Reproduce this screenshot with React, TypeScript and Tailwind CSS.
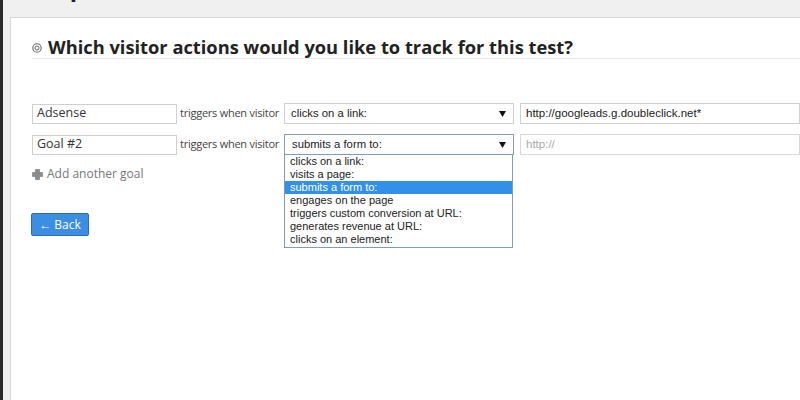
const options = [
  "clicks on a link:",
  "visits a page:",
  "submits a form to:",
  "engages on the page",
  "triggers custom conversion at URL:",
  "generates revenue at URL:",
  "clicks on an element:",
];

const Arrow = () => (
  <svg width="7" height="6" viewBox="0 0 7 6" className="shrink-0">
    <path d="M0 0 L7 0 L3.5 6 Z" fill="#111" />
  </svg>
);

const App = () => {
  return (
    <div className="flex h-[400px] w-[800px] overflow-hidden bg-[#f0f0f0] font-['Open_Sans',sans-serif]">
      <div className="w-[3px] shrink-0 bg-[#2a2a2a]" />
      <div className="flex flex-1 flex-col">
        <div className="h-[17px] overflow-hidden pl-[29px]">
          <div className="-mt-[33px] text-[24px] font-bold leading-[40px] text-[#222]">Step</div>
        </div>
        <div className="ml-[7px] flex-1 border-l border-t border-[#d8d8d8] bg-white pl-[21px] pt-[17px]">
          {/* title */}
          <div className="flex items-center gap-[6px] border-b border-[#ebebeb] text-[18.3px] font-bold leading-[23px] text-[#222]">
            <svg width="10" height="10" viewBox="0 0 10 10" className="mt-[2px] shrink-0">
              <circle cx="5" cy="5" r="4.2" fill="none" stroke="#666" strokeWidth="1.1" />
              <circle cx="5" cy="5" r="2" fill="none" stroke="#666" strokeWidth="1" />
            </svg>
            <span>Which visitor actions would you like to track for this test?</span>
          </div>

          {/* goal rows */}
          <div className="mt-[44px] flex flex-col gap-[10px]">
            <div className="flex items-center">
              <div className="flex h-[20px] w-[145px] shrink-0 items-center border border-[#d0d0d0] px-[4px] text-[12.5px] text-[#333]">Adsense</div>
              <div className="w-[107px] shrink-0 whitespace-nowrap pl-[3px] text-[11px] tracking-[-0.25px] text-[#444]">triggers when visitor</div>
              <div className="flex h-[21px] w-[230px] shrink-0 items-center justify-between border border-[#d0d0d0] pl-[6px] pr-[7px] font-['Liberation_Sans',Arial,sans-serif] text-[11.3px] text-[#222]">
                <span>clicks on a link:</span>
                <Arrow />
              </div>
              <div className="ml-[6px] flex h-[21px] flex-1 items-center border border-[#d0d0d0] pl-[5px] font-['Liberation_Sans',Arial,sans-serif] text-[11.5px] text-[#222]">
                http://googleads.g.doubleclick.net*
              </div>
            </div>
            <div className="flex items-center">
              <div className="flex h-[20px] w-[145px] shrink-0 items-center border border-[#d0d0d0] px-[4px] text-[12.5px] text-[#333]">Goal #2</div>
              <div className="w-[107px] shrink-0 whitespace-nowrap pl-[3px] text-[11px] tracking-[-0.25px] text-[#444]">triggers when visitor</div>
              <div className="relative w-[230px] shrink-0">
                <div className="flex h-[21px] items-center justify-between border border-[#8a9bb5] pl-[7px] pr-[7px] font-['Liberation_Sans',Arial,sans-serif] text-[11.3px] text-[#222]">
                  <span>submits a form to:</span>
                  <Arrow />
                </div>
                <div className="absolute left-0 top-[20px] w-[229px] border border-[#7f9db9] bg-white pb-[1px] font-['Liberation_Sans',Arial,sans-serif] text-[11px] leading-[13px] text-[#222]">
                  {options.map((o, i) => (
                    <div key={o} className={i === 2 ? "bg-[#3390e8] pl-[5px] text-white" : "pl-[5px]"}>
                      {o}
                    </div>
                  ))}
                </div>
              </div>
              <div className="ml-[6px] flex h-[21px] flex-1 items-center border border-[#d8d8d8] pl-[5px] font-['Liberation_Sans',Arial,sans-serif] text-[11.5px] text-[#aaa]">
                http://
              </div>
            </div>
          </div>

          {/* add goal */}
          <div className="mt-[9px] flex h-[20px] items-center gap-[4px] text-[12px] text-[#777]">
            <svg width="11" height="11" viewBox="0 0 11 11" className="shrink-0">
              <path d="M3.5 0.5 H7.5 V3.5 H10.5 V7.5 H7.5 V10.5 H3.5 V7.5 H0.5 V3.5 H3.5 Z" fill="#8c8c8c" stroke="#777" strokeWidth="0.6" />
            </svg>
            <span>Add another goal</span>
          </div>

          {/* back */}
          <button className="mt-[29px] -ml-[1px] flex h-[23px] w-[58px] items-center justify-center rounded-[2px] border border-[#2c6cb8] bg-[#3b8ee2] text-[12px] text-white">
            ← Back
          </button>
        </div>
      </div>
    </div>
  );
};

export default App;
